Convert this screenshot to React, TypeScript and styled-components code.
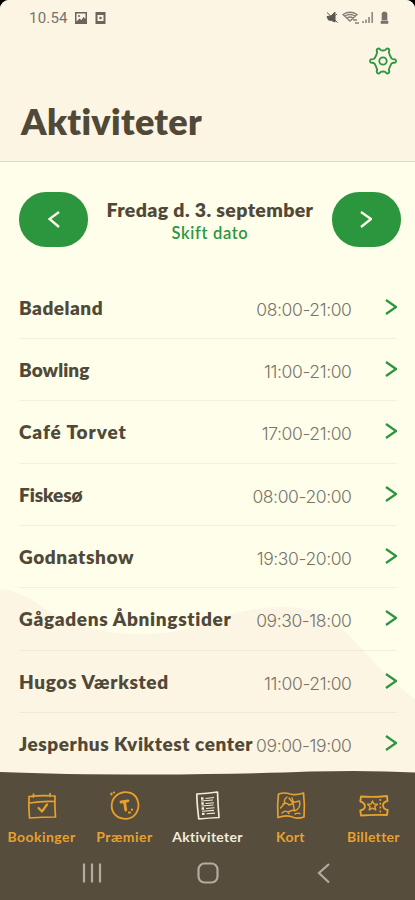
import React from 'react';
import styled, { createGlobalStyle } from 'styled-components';

const ink = '#514938';
const green = '#2c963f';
const orange = '#e8a12c';
const bark = '#564d3c';

const Global = createGlobalStyle`
  * { box-sizing: border-box; }
  body { margin: 0; background: #000; }
  button { border: 0; padding: 0; background: none; font: inherit; }
`;

const Screen = styled.div`
  position: relative;
  width: 415px;
  height: 900px;
  overflow: hidden;
  display: flex;
  flex-direction: column;
  background: #fffeea;
  border-radius: 9px 9px 0 0;
  color: ${ink};
  font-family: Lato, 'Liberation Sans', sans-serif;
`;

const Header = styled.header`
  height: 162px;
  flex: none;
  display: flex;
  flex-direction: column;
  background: #fcf5e3;
  border-bottom: 1.5px solid #dadbcb;
`;

const StatusBar = styled.div`
  height: 36px;
  display: flex;
  align-items: center;
  justify-content: space-between;
  padding: 0 25px 0 29px;
  color: #77736a;
`;

const StatusGroup = styled.div<{ $gap: number }>`
  display: flex;
  align-items: center;
  gap: ${(p) => p.$gap}px;
`;

const Clock = styled.span`
  font: 400 15px/18px Roboto, sans-serif;
  letter-spacing: 0.2px;
`;

const Tools = styled.div`
  display: flex;
  justify-content: flex-end;
  height: 50px;
  padding: 11px 17px 0 0;
`;

const Title = styled.h1`
  margin: 13px 0 0 21px;
  font-size: 36px;
  font-weight: 800;
  line-height: 44px;
  letter-spacing: 0.3px;
`;

const Content = styled.main`
  position: relative;
  flex: 1;
  min-height: 0;
  display: flex;
  flex-direction: column;
`;

const Hills = styled.svg`
  position: absolute;
  left: 0;
  bottom: 0;
`;

const DatePicker = styled.section`
  position: relative;
  display: flex;
  align-items: center;
  justify-content: space-between;
  height: 55px;
  margin: 30px 14px 29.5px 19px;
`;

const RoundButton = styled.button`
  width: 69px;
  height: 55px;
  border-radius: 27px;
  display: grid;
  place-items: center;
  background: ${green};
  color: #fffeea;
`;

const DateText = styled.div`
  display: flex;
  flex-direction: column;
  align-items: center;
  white-space: nowrap;
  padding-top: 2px;
`;

const Day = styled.strong`
  font-size: 19.5px;
  line-height: 25px;
  font-weight: 800;
  letter-spacing: 0.35px;
`;

const ChangeDate = styled.button`
  color: ${green};
  font-size: 16.5px;
  line-height: 23px;
  font-weight: 600;
  letter-spacing: 0.65px;
`;

const List = styled.ul`
  position: relative;
  list-style: none;
  margin: 0;
  padding: 0 18px 0 19px;
`;

const Row = styled.li`
  display: flex;
  align-items: center;
  height: 62.35px;
  border-bottom: 1px solid rgba(110, 120, 90, 0.09);
  white-space: nowrap;
`;

const Name = styled.span<{ $spacing: number }>`
  flex: 1;
  width: 0;
  font-size: 19px;
  font-weight: 800;
  letter-spacing: ${(p) => p.$spacing}px;
`;

const Time = styled.span`
  font-family: Inter, sans-serif;
  font-size: 17.5px;
  font-weight: 300;
  letter-spacing: -0.4px;
  color: #77746a;
  padding-top: 4px;
  margin-right: 33.5px;
`;

const Footer = styled.footer`
  position: relative;
  flex: none;
  height: 130px;
  margin-top: -1px;
  background: ${bark};
`;

const Ridge = styled.svg`
  position: absolute;
  top: 0;
  left: 0;
`;

const Tabs = styled.nav`
  position: relative;
  display: grid;
  grid-template-columns: repeat(5, 1fr);
  height: 79px;
  padding-top: 21px;
`;

const Tab = styled.button<{ $active: boolean }>`
  display: flex;
  flex-direction: column;
  align-items: center;
  color: ${(p) => (p.$active ? '#f1ecdc' : orange)};
`;

const TabLabel = styled.span<{ $spacing: number }>`
  margin-top: 7px;
  font-size: 14px;
  line-height: 18px;
  font-weight: 700;
  letter-spacing: ${(p) => p.$spacing}px;
  white-space: nowrap;
`;

const SystemNav = styled.div`
  display: flex;
  justify-content: space-between;
  align-items: center;
  height: 48px;
  padding: 0 80px;
  color: #b2aca0;
`;

const Chevron = ({ left = false }: { left?: boolean }) => (
  <svg width="12" height="17" viewBox="0 0 12 17" fill="none" stroke="currentColor" strokeWidth="2.300">
    <path d={left ? 'M11 1 1.5 8 11 16' : 'M1 1 11 8 1 16'} />
  </svg>
);

const Gear = () => (
  <svg width="30" height="28" viewBox="0 0 30 28" fill="none" stroke={green} strokeWidth="1.8" strokeLinejoin="round">
    <path d="M9.500 1.800Q11.500 .8 12.500 3Q15 4 17.500 3Q18.500 .8 20.500 1.800Q22 3 20.800 5.200Q21.500 8 23.500 11.500Q25 12.500 27.500 12.500Q28.800 14 27.500 15.500Q25 15.500 23.500 16.500Q21.500 20 20.800 22.800Q22 25 20.500 26.200Q18.500 27.200 17.500 25Q15 24 12.500 25Q11.500 27.200 9.500 26.200Q8 25 9.200 22.800Q8.500 20 6.500 16.500Q5 15.500 2.500 15.500Q1.200 14 2.500 12.500Q5 12.500 6.500 11.500Q8.500 8 9.200 5.200Q8 3 9.500 1.800Z" />
    <circle cx="15" cy="14" r="3.700" />
  </svg>
);

const StatusIcons = () => (
  <svg width="64" height="14" viewBox="0 0 64 14" fill="none" stroke="currentColor" strokeWidth="1.300">
    <path d="M1 5.500 5 5 9 1V11L5.500 9.500 2.500 9ZM1 1.500l10.500 10M9.500 4.500l1.500-1.500" fill="#5c5951" stroke="#5c5951" strokeWidth="1" />
    <path d="M17 3.500Q24 -1 31 3.500L24 10zM19 5Q24 2 29 5M21 7q3-2 6 0M27 9h4m-2 3h4" stroke="#858178" />
    <path d="M37 12v-2M40 12V8.500M43 12V6M46.200 12V1" stroke="#918d84" strokeWidth="1.700" />
    <path d="M57 1h3v1h1v7h-5V2h1zM55 10h7v2.500h-7z" fill="#77736a" strokeWidth=".6" />
  </svg>
);

const BookingIcon = () => (
  <svg width="32" height="30" viewBox="0 0 32 30" fill="none" stroke="currentColor" strokeWidth="1.700" strokeLinecap="round" strokeLinejoin="round">
    <path d="M3 5.500Q16 4 29 5Q28.500 15 29.500 26Q16 26 3.500 27Q2.500 15 3 5.500ZM3.500 12Q15 10 28.500 10.500M7.500 3v3M24 2.500v3" />
    <path d="m12.500 17 3.500 3.500 5-7" strokeWidth="2.200" />
  </svg>
);

const PrizeIcon = () => (
  <svg width="32" height="30" viewBox="0 0 32 30" fill="none" stroke="currentColor" strokeWidth="1.800" strokeLinecap="round">
    <path d="M15.500 1.200Q28 1 29.500 13.500C29.500 23 23 28 16 27.800C7 27.500 2.300 21 2.700 14C3 7 8 2 15.500 1.200" />
    <path d="M12 11 19 9.800M15.500 11l1.300 8" strokeWidth="2.800" />
    <path d="M2.500 2.500v1M5 1.500h.1M20 21.500h1m2-3v.2" strokeWidth="2.200" />
  </svg>
);

const ActivityIcon = () => (
  <svg width="32" height="30" viewBox="0 0 32 30" fill="none" stroke="currentColor" strokeWidth="1.700" strokeLinejoin="round">
    <path d="M4.800 3Q15 2.500 25.500 1Q26 15 27 26.500Q17 27 6.800 28Q5 14 4.800 3Z" />
    <path d="M9 7.500h2.500M9.300 12.500h2.500M9.600 17.500h2.500M10 22.800h2.500" strokeWidth="2.300" />
    <path d="m13.500 7.500 8.500-1M13.500 12.500l8.500-.8M14 17.500l8.500-.7M14.500 22.800l8.500-.7M9 10l12-1M9.500 15l12-1M10 20.200l12-.8" strokeWidth="1.100" />
  </svg>
);

const MapIcon = () => (
  <svg width="32" height="30" viewBox="0 0 32 30" fill="none" stroke="currentColor" strokeWidth="1.700" strokeLinejoin="round" strokeLinecap="round">
    <path d="M3.500 3Q10 1 15 3Q21 4.500 28.500 2Q30 14 29 26Q22 28.500 16 25.500Q10 24 3 26.500Q2 14 3.500 3Z" />
    <path d="M12 6Q8 9 10 12L5.500 17M8 13q4-2 6 1l3-1M14 7l3.500 4.500M17 7l1.500 4.500M18 11.500l6.500-1.500q2 7-5 10zM7 22q4-4 7 .500M19 19l-5 1.500M20 23q3-1.500 5-.500" strokeWidth="1.400" />
  </svg>
);

const TicketIcon = () => (
  <svg width="32" height="30" viewBox="0 0 32 30" fill="none" stroke="currentColor" strokeWidth="1.900" strokeLinejoin="round">
    <path d="M3 5.500Q16 6.500 29 5L29.500 10Q25 11 25 14.500Q25.500 18.500 29.700 19L29 24Q16 23.500 3 24.500L2.300 19.500Q7 18.500 7 15Q6.500 11.500 2.300 10.500Z" />
    <path d="m14.500 10 1.500 3 3.500.2-2.700 2.300 1 3.500-3.300-1.900-3.300 1.900.9-3.500-2.600-2.300 3.500-.2z" strokeWidth="1.400" />
    <path d="M22.300 8v14" strokeDasharray="2 1.800" strokeWidth="1.500" />
  </svg>
);

const activities = [
  { name: 'Badeland', time: '08:00-21:00', spacing: 0.5 },
  { name: 'Bowling', time: '11:00-21:00', spacing: 0.05 },
  { name: 'Café Torvet', time: '17:00-21:00', spacing: 0.9 },
  { name: 'Fiskesø', time: '08:00-20:00', spacing: -0.1 },
  { name: 'Godnatshow', time: '19:30-20:00', spacing: 0.6 },
  { name: 'Gågadens Åbningstider', time: '09:30-18:00', spacing: 0.67 },
  { name: 'Hugos Værksted', time: '11:00-21:00', spacing: 0.65 },
  { name: 'Jesperhus Kviktest center', time: '09:00-19:00', spacing: 0.55 },
];

const tabs = [
  { label: 'Bookinger', Icon: BookingIcon, spacing: 0.45 },
  { label: 'Præmier', Icon: PrizeIcon, spacing: 0.5 },
  { label: 'Aktiviteter', Icon: ActivityIcon, spacing: 0.3 },
  { label: 'Kort', Icon: MapIcon, spacing: 0.3 },
  { label: 'Billetter', Icon: TicketIcon, spacing: 0.3 },
];

export default function App() {
  return (
    <Screen>
      <Global />
      <Header>
        <StatusBar>
          <StatusGroup $gap={7}>
            <Clock>10.54</Clock>
            <svg width="32" height="12" viewBox="0 0 32 12">
              <path fill="#68655c" fillRule="evenodd" d="M0 0h12v12H0zM1.500 1.500v8l3-3 2 1.500 2-3 2 2V1.500zM20.500 0h10v12h-10zM22.500 3v6h6V3z" />
              <circle cx="4" cy="4" r="1" fill="#68655c" />
              <circle cx="25.500" cy="6" r="1.300" fill="#68655c" />
            </svg>
          </StatusGroup>
          <StatusIcons />
        </StatusBar>
        <Tools><Gear /></Tools>
        <Title>Aktiviteter</Title>
      </Header>
      <Content>
        <Hills width="415" height="184" viewBox="0 0 415 184">
          <path fill="#fcf5e4" d="M0 2C35 7 42 25 70 35C110 50 155 50 190 41C225 30 255 16 300 21C350 31 360 72 415 112V184H0Z" />
        </Hills>
        <DatePicker>
          <RoundButton aria-label="Forrige dag"><Chevron left /></RoundButton>
          <DateText>
            <Day>Fredag d. 3. september</Day>
            <ChangeDate>Skift dato</ChangeDate>
          </DateText>
          <RoundButton aria-label="Næste dag"><Chevron /></RoundButton>
        </DatePicker>
        <List>
          {activities.map((a) => (
            <Row key={a.name}>
              <Name $spacing={a.spacing}>{a.name}</Name>
              <Time>{a.time}</Time>
              <svg width="12" height="17" viewBox="0 0 12 17" fill="none" stroke={green} strokeWidth="2.200">
                <path d="M1 1 11 8 1 15" />
              </svg>
            </Row>
          ))}
        </List>
      </Content>
      <Footer>
        <Ridge width="415" height="6" viewBox="0 0 415 6">
          <path fill="#fcf5e4" d="M0 0H415V2.500Q370 0 310 1.500Q250 4 150 4.500Q60 4.500 0 2Z" />
        </Ridge>
        <Tabs>
          {tabs.map(({ label, Icon, spacing }) => (
            <Tab key={label} $active={label === 'Aktiviteter'}>
              <Icon />
              <TabLabel $spacing={spacing}>{label}</TabLabel>
            </Tab>
          ))}
        </Tabs>
        <SystemNav>
          <svg width="24" height="22" viewBox="0 0 24 22" stroke="currentColor" strokeWidth="2.200">
            <path d="M4 1.500v19M12 1.500v19M20 1.500v19" />
          </svg>
          <svg width="24" height="22" viewBox="0 0 24 22" fill="none" stroke="currentColor" strokeWidth="2.200">
            <rect x="2.500" y="1.500" width="19" height="19" rx="6" />
          </svg>
          <svg width="24" height="22" viewBox="0 0 24 22" fill="none" stroke="currentColor" strokeWidth="2.200">
            <path d="M18 2 8 11 18 20.500" />
          </svg>
        </SystemNav>
      </Footer>
    </Screen>
  );
}
